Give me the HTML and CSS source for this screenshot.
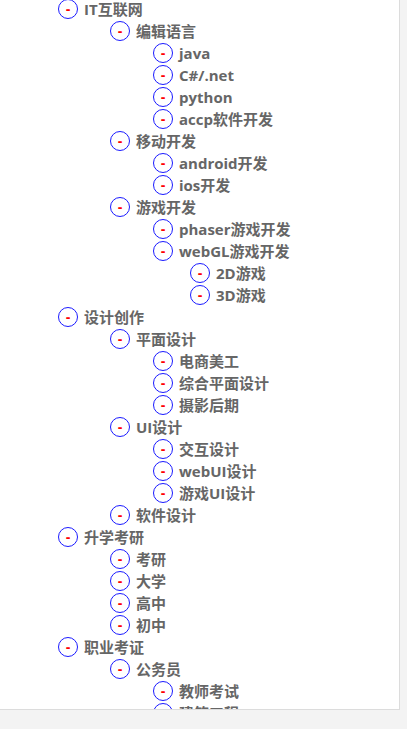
FILE: index.html
```html
<!DOCTYPE html>
<html lang="zh">
<head>
<meta charset="utf-8">
<title>tree</title>
<link rel="stylesheet" href="styles.css">
</head>
<body>
<div class="panel">
  <ul class="tree l0">
    <li><div class="node"><span class="tog">-</span><span class="label">IT互联网</span></div>
      <ul class="l1">
        <li><div class="node"><span class="tog">-</span><span class="label">编辑语言</span></div>
          <ul class="l2">
            <li><div class="node"><span class="tog">-</span><span class="label">java</span></div></li>
            <li><div class="node"><span class="tog">-</span><span class="label">C#/.net</span></div></li>
            <li><div class="node"><span class="tog">-</span><span class="label">python</span></div></li>
            <li><div class="node"><span class="tog">-</span><span class="label">accp软件开发</span></div></li>
          </ul>
        </li>
        <li><div class="node"><span class="tog">-</span><span class="label">移动开发</span></div>
          <ul class="l2">
            <li><div class="node"><span class="tog">-</span><span class="label">android开发</span></div></li>
            <li><div class="node"><span class="tog">-</span><span class="label">ios开发</span></div></li>
          </ul>
        </li>
        <li><div class="node"><span class="tog">-</span><span class="label">游戏开发</span></div>
          <ul class="l2">
            <li><div class="node"><span class="tog">-</span><span class="label">phaser游戏开发</span></div></li>
            <li><div class="node"><span class="tog">-</span><span class="label">webGL游戏开发</span></div>
              <ul class="l3">
                <li><div class="node"><span class="tog">-</span><span class="label">2D游戏</span></div></li>
                <li><div class="node"><span class="tog">-</span><span class="label">3D游戏</span></div></li>
              </ul>
            </li>
          </ul>
        </li>
      </ul>
    </li>
    <li><div class="node"><span class="tog">-</span><span class="label">设计创作</span></div>
      <ul class="l1">
        <li><div class="node"><span class="tog">-</span><span class="label">平面设计</span></div>
          <ul class="l2">
            <li><div class="node"><span class="tog">-</span><span class="label">电商美工</span></div></li>
            <li><div class="node"><span class="tog">-</span><span class="label">综合平面设计</span></div></li>
            <li><div class="node"><span class="tog">-</span><span class="label">摄影后期</span></div></li>
          </ul>
        </li>
        <li><div class="node"><span class="tog">-</span><span class="label">UI设计</span></div>
          <ul class="l2">
            <li><div class="node"><span class="tog">-</span><span class="label">交互设计</span></div></li>
            <li><div class="node"><span class="tog">-</span><span class="label">webUI设计</span></div></li>
            <li><div class="node"><span class="tog">-</span><span class="label">游戏UI设计</span></div></li>
          </ul>
        </li>
        <li><div class="node"><span class="tog">-</span><span class="label">软件设计</span></div></li>
      </ul>
    </li>
    <li><div class="node"><span class="tog">-</span><span class="label">升学考研</span></div>
      <ul class="l1">
        <li><div class="node"><span class="tog">-</span><span class="label">考研</span></div></li>
        <li><div class="node"><span class="tog">-</span><span class="label">大学</span></div></li>
        <li><div class="node"><span class="tog">-</span><span class="label">高中</span></div></li>
        <li><div class="node"><span class="tog">-</span><span class="label">初中</span></div></li>
      </ul>
    </li>
    <li><div class="node"><span class="tog">-</span><span class="label">职业考证</span></div>
      <ul class="l1">
        <li><div class="node"><span class="tog">-</span><span class="label">公务员</span></div>
          <ul class="l2">
            <li><div class="node"><span class="tog">-</span><span class="label">教师考试</span></div></li>
            <li><div class="node"><span class="tog">-</span><span class="label">建筑工程</span></div></li>
          </ul>
        </li>
      </ul>
    </li>
  </ul>
</div>
</body>
</html>
```

FILE: styles.css
```css
html, body {
  margin: 0;
  padding: 0;
  background: #f3f3f3;
}
.panel {
  width: 399px;
  height: 709px;
  background: #ffffff;
  border-right: 1px solid #dcdcdc;
  border-bottom: 1px solid #dcdcdc;
  overflow: hidden;
}
ul {
  list-style: none;
  margin: 0;
  padding: 0;
}
.l0 {
  margin-top: -2px;
  padding-left: 58px;
}
.l1 { padding-left: 52px; }
.l2 { padding-left: 43px; }
.l3 { padding-left: 37px; }
.node {
  display: flex;
  align-items: center;
  gap: 6px;
  height: 22px;
}
.tog {
  box-sizing: border-box;
  width: 20px;
  height: 20px;
  border: 1.5px solid #1a1aff;
  border-radius: 50%;
  display: flex;
  align-items: center;
  justify-content: center;
  color: #ff0000;
  font-family: "Liberation Sans", Arial, sans-serif;
  font-weight: bold;
  font-size: 14px;
  line-height: 1;
  flex: none;
}
.label {
  font-family: "Open Sans", "Noto Sans CJK SC", sans-serif;
  font-weight: bold;
  font-size: 15px;
  color: #666666;
  line-height: 22px;
  white-space: nowrap;
}
```
